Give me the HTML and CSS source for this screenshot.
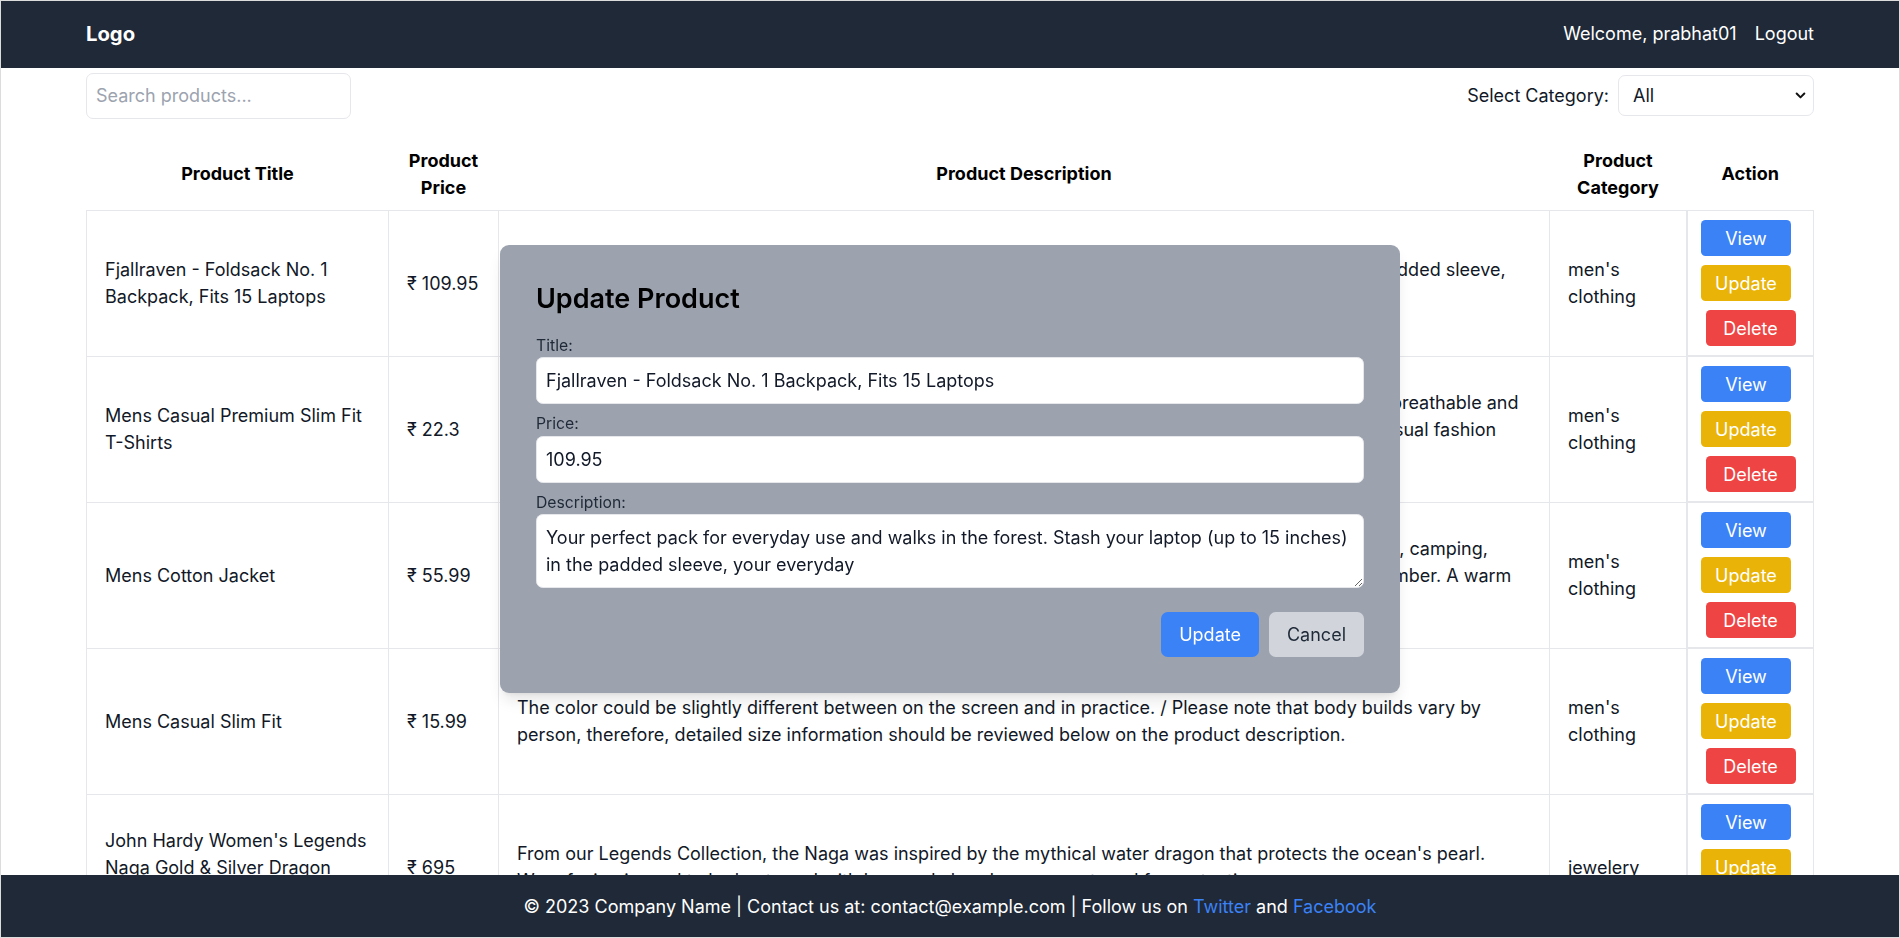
FILE: index.html
```html
<!DOCTYPE html>
<html lang="en">
<head>
<meta charset="utf-8">
<title>Products</title>
<link rel="stylesheet" href="styles.css">
</head>
<body>
<header class="navbar">
  <div class="nav-inner">
    <div class="logo">Logo</div>
    <div class="nav-right">
      <span>Welcome, prabhat01</span>
      <span>Logout</span>
    </div>
  </div>
</header>

<main class="container">
  <div class="toolbar">
    <input class="search" type="text" placeholder="Search products...">
    <div class="filter">
      <label class="filter-label" for="cat">Select Category:</label>
      <div class="select-wrap">
        <select class="select" id="cat">
          <option>All</option>
          <option>men's clothing</option>
          <option>jewelery</option>
          <option>electronics</option>
          <option>women's clothing</option>
        </select>
        <svg class="chevron" viewBox="0 0 10 10" aria-hidden="true"><path d="M1.5 3.2 L5 6.7 L8.5 3.2" fill="none" stroke="#111" stroke-width="1.8" stroke-linecap="round" stroke-linejoin="round"/></svg>
      </div>
    </div>
  </div>

  <table class="table">
    <thead>
      <tr>
        <th class="col-title">Product Title</th>
        <th class="col-price">Product Price</th>
        <th class="col-desc">Product Description</th>
        <th class="col-cat">Product Category</th>
        <th class="col-act">Action</th>
      </tr>
    </thead>
    <tbody>
      <tr>
        <td>Fjallraven - Foldsack No. 1 Backpack, Fits 15 Laptops</td>
        <td>₹ 109.95</td>
        <td>Your perfect pack for everyday use and walks in the forest. Stash your laptop (up to 15 inches) in the padded sleeve, your everyday</td>
        <td>men's clothing</td>
        <td class="actions"><button class="btn btn-view">View</button><button class="btn btn-update">Update</button><button class="btn btn-delete">Delete</button></td>
      </tr>
      <tr>
        <td>Mens Casual Premium Slim Fit T-Shirts</td>
        <td>₹ 22.3</td>
        <td>Slim-fitting style, contrast raglan long sleeve, three-button henley placket, light weight &amp; soft fabric for breathable and comfortable wearing. And Solid stitched shirts with round neck made for durability and a great fit for casual fashion wear and diehard baseball fans. The Henley style round neckline includes a three-button placket.</td>
        <td>men's clothing</td>
        <td class="actions"><button class="btn btn-view">View</button><button class="btn btn-update">Update</button><button class="btn btn-delete">Delete</button></td>
      </tr>
      <tr>
        <td>Mens Cotton Jacket</td>
        <td>₹ 55.99</td>
        <td>great outerwear jackets for Spring/Autumn/Winter, suitable for many occasions, such as working, hiking, camping, mountain/rock climbing, cycling, traveling or other outdoors. Good gift choice for you or your family member. A warm hearted love to Father, husband or son in this thanksgiving or Christmas Day.</td>
        <td>men's clothing</td>
        <td class="actions"><button class="btn btn-view">View</button><button class="btn btn-update">Update</button><button class="btn btn-delete">Delete</button></td>
      </tr>
      <tr>
        <td>Mens Casual Slim Fit</td>
        <td>₹ 15.99</td>
        <td>The color could be slightly different between on the screen and in practice. / Please note that body builds vary by person, therefore, detailed size information should be reviewed below on the product description.</td>
        <td>men's clothing</td>
        <td class="actions"><button class="btn btn-view">View</button><button class="btn btn-update">Update</button><button class="btn btn-delete">Delete</button></td>
      </tr>
      <tr>
        <td>John Hardy Women's Legends Naga Gold &amp; Silver Dragon Station Chain Bracelet</td>
        <td>₹ 695</td>
        <td>From our Legends Collection, the Naga was inspired by the mythical water dragon that protects the ocean's pearl. Wear facing inward to be bestowed with love and abundance, or outward for protection.</td>
        <td>jewelery</td>
        <td class="actions"><button class="btn btn-view">View</button><button class="btn btn-update">Update</button><button class="btn btn-delete">Delete</button></td>
      </tr>
      <tr>
        <td>Solid Gold Petite Micropave</td>
        <td>₹ 168</td>
        <td>Satisfaction Guaranteed. Return or exchange any order within 30 days.Designed and sold by Hafeez Center in the United States. Satisfaction Guaranteed. Return or exchange any order within 30 days.</td>
        <td>jewelery</td>
        <td class="actions"><button class="btn btn-view">View</button><button class="btn btn-update">Update</button><button class="btn btn-delete">Delete</button></td>
      </tr>
    </tbody>
  </table>
</main>

<div class="modal-overlay">
  <div class="modal">
    <h2 class="modal-title">Update Product</h2>
    <div class="field">
      <label for="t">Title:</label>
      <input id="t" type="text" value="Fjallraven - Foldsack No. 1 Backpack, Fits 15 Laptops">
    </div>
    <div class="field">
      <label for="p">Price:</label>
      <input id="p" type="text" value="109.95">
    </div>
    <div class="field">
      <label for="d">Description:</label>
      <textarea id="d">Your perfect pack for everyday use and walks in the forest. Stash your laptop (up to 15 inches) in the padded sleeve, your everyday</textarea>
    </div>
    <div class="modal-actions">
      <button class="mbtn mbtn-update">Update</button>
      <button class="mbtn mbtn-cancel">Cancel</button>
    </div>
  </div>
</div>

<footer class="footer">
  © 2023 Company Name | Contact us at: contact@example.com | Follow us on <a href="#">Twitter</a> and <a href="#">Facebook</a>
</footer>
</body>
</html>
```

FILE: styles.css
```css
* { box-sizing: border-box; }

html { scrollbar-width: none; }
html::-webkit-scrollbar { display: none; }

body {
  margin: 0;
  font-family: Inter, "Noto Sans", "DejaVu Sans", sans-serif;
  font-size: 18px;
  line-height: 27px;
  color: #111827;
  background: #ffffff;
}

body::after {
  content: "";
  position: fixed;
  inset: 0;
  border: 1px solid #dcdcdc;
  pointer-events: none;
  z-index: 100;
}

/* Navbar */
.navbar {
  background: #1f2937;
  color: #ffffff;
  padding: 18px 0;
}
.nav-inner {
  width: 1728px;
  margin: 0 auto;
  display: flex;
  justify-content: space-between;
  align-items: center;
}
.logo {
  font-size: 20.25px;
  line-height: 31.5px;
  font-weight: 700;
}
.nav-right {
  display: flex;
  gap: 18px;
}

/* Main */
.container {
  width: 1728px;
  margin: 0 auto;
}
.toolbar {
  display: flex;
  justify-content: space-between;
  align-items: center;
  margin-top: 5px;
}
.search {
  width: 265px;
  height: 46px;
  padding: 9px;
  border: 1px solid #e5e7eb;
  border-radius: 7px;
  font: inherit;
  color: #111827;
  outline: none;
}
.search::placeholder { color: #9ca3af; }

.filter {
  display: flex;
  align-items: center;
  gap: 9px;
}
.filter-label { color: #111827; }
.select-wrap { position: relative; }
.select {
  appearance: none;
  -webkit-appearance: none;
  width: 196px;
  height: 41px;
  padding: 0 14px;
  border: 1px solid #e5e7eb;
  border-radius: 7px;
  font: inherit;
  background: #ffffff;
  color: #111827;
}
.chevron {
  position: absolute;
  right: 8px;
  top: 15px;
  width: 11px;
  height: 11px;
  pointer-events: none;
}

/* Table */
.table {
  width: 100%;
  table-layout: fixed;
  border-collapse: collapse;
  margin-top: 19px;
}
.col-title { width: 302px; }
.col-price { width: 110px; }
.col-desc { width: 1051px; }
.col-cat { width: 137px; }
.col-act { width: 128px; }

th {
  padding: 9px;
  font-weight: 700;
  color: #000000;
  text-align: center;
}
td {
  border: 1px solid #e5e7eb;
  padding: 18px;
  color: #111827;
}
td.actions {
  display: flex;
  flex-direction: column;
  align-items: center;
  gap: 9px;
  padding: 9px;
}
.btn {
  width: 90px;
  height: 36px;
  padding: 0;
  border: 0;
  border-radius: 4.5px;
  color: #ffffff;
  font: inherit;
  line-height: 27px;
}
.btn-view { background: #3b82f6; margin-right: 9px; }
.btn-update { background: #eab308; margin-right: 9px; }
.btn-delete { background: #ef4444; }

/* Modal */
.modal-overlay {
  position: fixed;
  inset: 0;
  display: flex;
  align-items: center;
  justify-content: center;
  z-index: 50;
}
.modal {
  width: 900px;
  background: #9ca3af;
  border-radius: 9px;
  padding: 36px;
  box-shadow: 0 10px 15px -3px rgba(0,0,0,0.1), 0 4px 6px -4px rgba(0,0,0,0.1);
}
.modal-title {
  margin: 0 0 18px;
  font-size: 27px;
  line-height: 36px;
  font-weight: 600;
  color: #000000;
}
.field { margin-bottom: 9px; }
.field label {
  display: block;
  font-size: 15.75px;
  line-height: 22.5px;
  color: #1f2937;
}
.field input,
.field textarea {
  display: block;
  width: 100%;
  padding: 9px;
  border: 1px solid #e5e7eb;
  border-radius: 6.75px;
  font: inherit;
  background: #ffffff;
  color: #111827;
  outline: none;
}
.field input { height: 47px; }
.field textarea { height: 74px; }

.modal-actions {
  display: flex;
  justify-content: flex-end;
  gap: 10px;
  margin-top: 24px;
}
.mbtn {
  padding: 9px 18px;
  border: 0;
  border-radius: 6.75px;
  font: inherit;
  line-height: 27px;
}
.mbtn-update { background: #3b82f6; color: #ffffff; }
.mbtn-cancel { background: #d1d5db; color: #1f2937; }

/* Footer */
.footer {
  position: fixed;
  left: 0;
  right: 0;
  bottom: 0;
  background: #1f2937;
  color: #ffffff;
  text-align: center;
  padding: 18px;
  z-index: 40;
}
.footer a {
  color: #3b82f6;
  text-decoration: none;
}
```
